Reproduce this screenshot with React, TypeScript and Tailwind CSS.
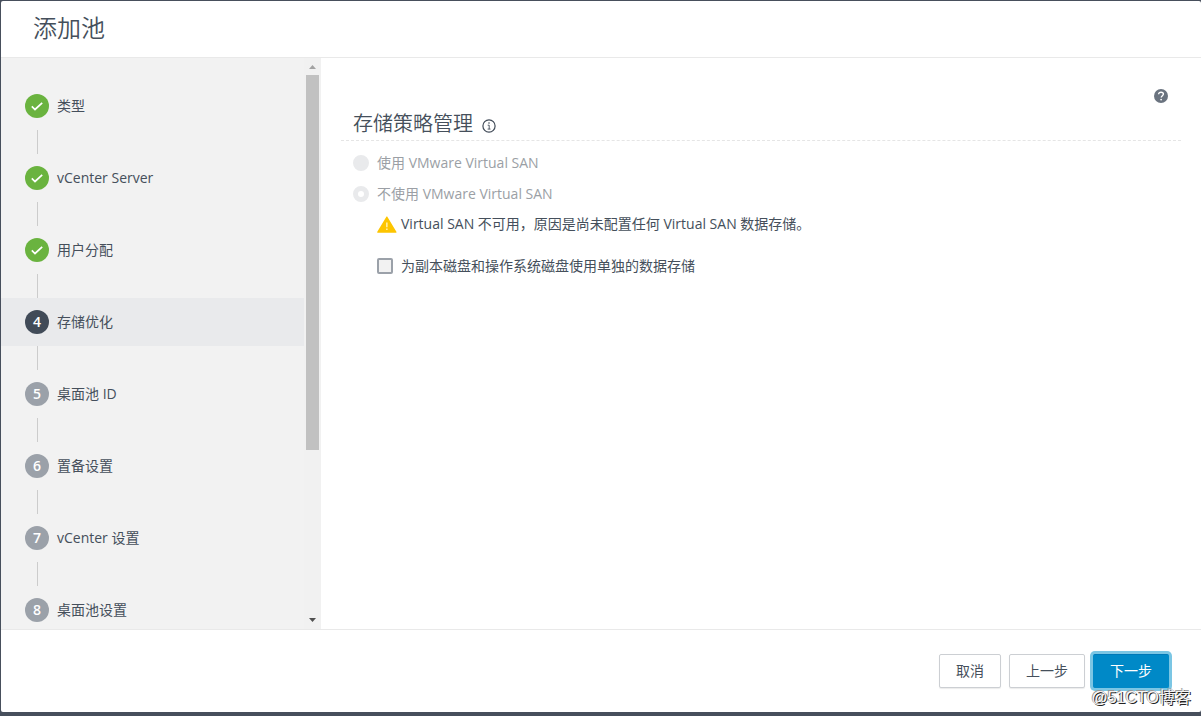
import type { ReactNode } from 'react'

type StepStatus = 'done' | 'current' | 'todo'

interface Step {
  title: string
  status: StepStatus
}

const steps: Step[] = [
  { title: '类型', status: 'done' },
  { title: 'vCenter Server', status: 'done' },
  { title: '用户分配', status: 'done' },
  { title: '存储优化', status: 'current' },
  { title: '桌面池 ID', status: 'todo' },
  { title: '置备设置', status: 'todo' },
  { title: 'vCenter 设置', status: 'todo' },
  { title: '桌面池设置', status: 'todo' },
]

const badgeColors: Record<StepStatus, string> = {
  done: 'bg-[#6ab33f]',
  current: 'bg-[#414b58]',
  todo: 'bg-[#9ba1a9]',
}

function CheckIcon() {
  return (
    <svg viewBox="0 0 24 24" className="size-6" fill="none" stroke="white" strokeWidth="1.7" aria-hidden="true">
      <path d="M6.8 12.4l3.2 3.1 7.2-6.6" />
    </svg>
  )
}

function InfoIcon() {
  return (
    <svg viewBox="0 0 14 14" className="size-3.5" fill="none" stroke="#414b58" aria-hidden="true">
      <circle cx="7" cy="7" r="6.1" strokeWidth="1.2" />
      <path d="M5.7 6.2h1.5v3.8M5.6 10.1h2.9" strokeWidth="0.9" />
      <circle cx="7" cy="4" r="0.8" fill="#414b58" stroke="none" />
    </svg>
  )
}

function HelpIcon() {
  return (
    <svg viewBox="0 0 14 14" className="size-3.5" fill="none" aria-hidden="true">
      <circle cx="7" cy="7" r="7" fill="#6a737f" />
      <path d="M4.6 5.2c0-1.3 1-2 2.4-2s2.4.7 2.4 1.9c0 1.6-2.2 1.6-2.2 3.5" stroke="white" strokeWidth="1.4" />
      <circle cx="7.1" cy="10.6" r="0.9" fill="white" />
    </svg>
  )
}

function WarningIcon() {
  return (
    <svg viewBox="0 0 20 17" className="h-[17px] w-5 shrink-0" aria-hidden="true">
      <path d="M9.2.9c.3-.6 1-.6 1.3 0l8.9 14.8c.3.6 0 1.1-.6 1.1H.9c-.6 0-.9-.5-.6-1.1z" fill="#fdc500" />
      <path d="M9.1 6.5h1.5v4.8H9.1zM9.1 12.4h1.5V14H9.1z" fill="#fff0b0" />
    </svg>
  )
}

function StepItem({ step, index, last }: { step: Step; index: number; last: boolean }) {
  const current = step.status === 'current'
  return (
    <li className="shrink-0">
      <button
        type="button"
        aria-current={current ? 'step' : undefined}
        className={`flex h-12 w-full items-center gap-2 pl-6 text-left ${current ? 'bg-[#e9eaec]' : ''}`}
      >
        <span
          className={`flex size-6 shrink-0 items-center justify-center rounded-full font-semibold text-white ${badgeColors[step.status]}`}
        >
          {step.status === 'done' ? <CheckIcon /> : index + 1}
        </span>
        <span>{step.title}</span>
      </button>
      {!last && <div className="ml-9 h-6 w-px bg-[#cccccc]" />}
    </li>
  )
}

function Scrollbar() {
  return (
    <div className="flex w-[17px] shrink-0 flex-col items-center bg-[#f1f1f1]" aria-hidden="true">
      <svg viewBox="0 0 17 17" className="size-[17px] shrink-0">
        <path d="M5 11h7L8.5 7z" fill="#a3a3a3" />
      </svg>
      <div className="w-[13px] grow-[375] bg-[#c1c1c1]" />
      <div className="grow-[162]" />
      <svg viewBox="0 0 17 17" className="size-[17px] shrink-0">
        <path d="M5 6h7L8.5 10z" fill="#505050" />
      </svg>
    </div>
  )
}

function SanOption({ id, checked, children }: { id: string; checked?: boolean; children: ReactNode }) {
  return (
    <div className="flex items-center gap-2 text-[#9b9fa5]">
      <input
        type="radio"
        name="san"
        id={id}
        defaultChecked={checked}
        disabled
        className="size-4 shrink-0 appearance-none rounded-full border-[5px] border-[#e9eaec] bg-[#e9eaec] checked:bg-white"
      />
      <label htmlFor={id}>{children}</label>
    </div>
  )
}

const outlineButton =
  'h-[34px] rounded-xs border border-[#cccfd3] bg-white px-4 shadow-[0_1px_1px_rgba(0,0,0,0.08)]'

export default function App() {
  return (
    <div className="flex h-screen flex-col bg-[#474f5c] pt-px pb-1 pl-px font-['Open_Sans','Noto_Sans_CJK_SC',sans-serif] text-sm/5 text-[#454f5b]">
      <div role="dialog" aria-labelledby="dialog-title" className="relative flex min-h-0 flex-1 flex-col rounded-xs bg-white">
        <header className="flex h-[57px] shrink-0 items-center border-b border-[#e9e9e9] px-8 pb-0.5">
          <h1 id="dialog-title" className="text-2xl font-[350]">
            添加池
          </h1>
        </header>

        <div className="flex min-h-0 flex-1">
          <nav className="flex w-80 shrink-0 overflow-hidden bg-[#f2f2f2]">
            <ol className="flex flex-1 flex-col overflow-hidden pt-6">
              {steps.map((step, i) => (
                <StepItem key={step.title} step={step} index={i} last={i === steps.length - 1} />
              ))}
            </ol>
            <Scrollbar />
          </nav>

          <main className="min-w-0 flex-1 px-5 pt-[31px]">
            <div className="flex justify-end pr-[13px]">
              <button type="button" aria-label="帮助">
                <HelpIcon />
              </button>
            </div>

            <div className="flex items-center gap-[9px] border-b border-dashed border-[#e5e5e5] pt-[7px] pb-0.5 pl-3">
              <h2 className="text-xl/7 font-[350]">存储策略管理</h2>
              <button type="button" aria-label="信息" className="pt-1">
                <InfoIcon />
              </button>
            </div>

            <div className="pl-3">
              <div className="mt-3 flex flex-col gap-[11px]">
                <SanOption id="san-use">使用 VMware Virtual SAN</SanOption>
                <SanOption id="san-skip" checked>
                  不使用 VMware Virtual SAN
                </SanOption>
              </div>

              <p className="mt-[10px] flex items-center gap-1 pl-6">
                <WarningIcon />
                Virtual SAN 不可用，原因是尚未配置任何 Virtual SAN 数据存储。
              </p>

              <div className="mt-[22px] flex items-center gap-2 pl-6">
                <input
                  type="checkbox"
                  id="separate-datastores"
                  className="size-4 shrink-0 appearance-none rounded-xs border-2 border-[#9ba1a9] bg-[#f2f2f2] checked:bg-[#0089c7]"
                />
                <label htmlFor="separate-datastores">为副本磁盘和操作系统磁盘使用单独的数据存储</label>
              </div>
            </div>
          </main>
        </div>

        <footer className="flex shrink-0 justify-end gap-2 border-t border-[#e9e9e9] px-8 py-6">
          <button type="button" className={outlineButton}>
            取消
          </button>
          <button type="button" className={outlineButton}>
            上一步
          </button>
          <button
            type="button"
            className="h-[34px] rounded-xs border border-[#0089c7] border-t-[#0079b8] bg-[#0089c7] px-4 text-white ring-3 ring-[#7bc6e4]"
          >
            下一步
          </button>
        </footer>

        <span className="absolute right-[10px] bottom-1 font-['Liberation_Sans','Noto_Sans_CJK_SC',sans-serif] text-base/5 text-[#f4f4f4] [text-shadow:1px_1px_0_#222,-1px_-1px_0_#999]">
          @51CTO博客
        </span>
      </div>
    </div>
  )
}
